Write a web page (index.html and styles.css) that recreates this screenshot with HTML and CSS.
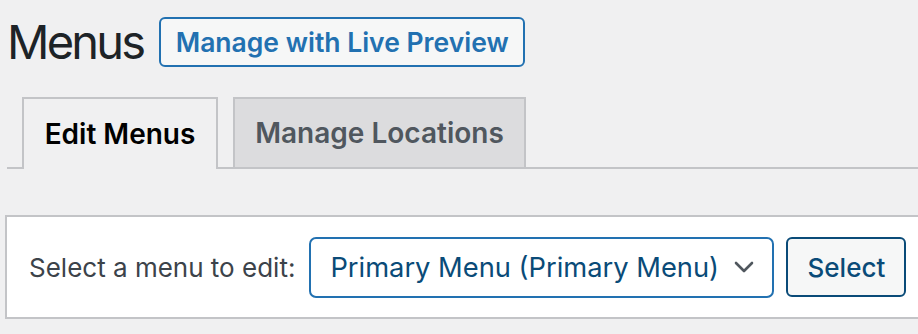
FILE: index.html
```html
<!DOCTYPE html>
<html lang="en">
<head>
<meta charset="utf-8">
<title>Menus</title>
<link rel="stylesheet" href="styles.css">
</head>
<body>
<div class="wrap">
  <div class="header">
    <h1 class="title">Menus</h1>
    <a class="live-btn" href="#">Manage with Live Preview</a>
  </div>
  <nav class="tabs">
    <a class="tab tab-active" href="#">Edit Menus</a>
    <a class="tab" href="#">Manage Locations</a>
  </nav>
  <div class="panel">
    <label class="label" for="menu">Select a menu to edit:</label>
    <div class="select">
      <span class="select-text">Primary Menu (Primary Menu)</span>
      <svg class="chevron" width="20" height="12" viewBox="0 0 20 12" aria-hidden="true"><path d="M2 2 L10 10 L18 2" fill="none" stroke="#50575e" stroke-width="2.6" stroke-linecap="round" stroke-linejoin="round"/></svg>
    </div>
    <button class="select-btn" type="button">Select</button>
  </div>
</div>
</body>
</html>
```

FILE: styles.css
```css
html, body {
  margin: 0;
  padding: 0;
  background: #f0f0f1;
  overflow: hidden;
}
body {
  font-family: Inter, "Noto Sans", "Liberation Sans", sans-serif;
  color: #3c434a;
}
.wrap {
  padding-top: 17px;
}
.header {
  display: flex;
  align-items: center;
  gap: 16px;
  padding-left: 7px;
}
.title {
  margin: 0;
  font-size: 47px;
  font-weight: 400;
  line-height: 50px;
  color: #1d2327;
  letter-spacing: -2.8px;
}
.live-btn {
  box-sizing: border-box;
  height: 50px;
  width: 366px;
  display: flex;
  align-items: center;
  justify-content: center;
  border: 2px solid #2271b1;
  border-radius: 6px;
  background: #f6f7f7;
  color: #2271b1;
  font-size: 26.5px;
  font-weight: 600;
  text-decoration: none;
}
.tabs {
  margin-top: 30px;
  margin-left: 7px;
  padding-left: 15px;
  display: flex;
  gap: 15px;
  border-bottom: 2px solid #c3c4c7;
}
.tab {
  box-sizing: border-box;
  height: 70px;
  display: flex;
  align-items: center;
  justify-content: center;
  border: 2px solid #c3c4c7;
  border-bottom: none;
  background: #dcdcde;
  color: #50575e;
  font-size: 28px;
  font-weight: 600;
  text-decoration: none;
  width: 293px;
}
.tab-active {
  width: 196px;
  background: #f0f0f1;
  color: #000;
  height: 72px;
  margin-bottom: -2px;
}
.panel {
  margin-top: 46px;
  margin-left: 5px;
  margin-right: -60px;
  box-sizing: border-box;
  height: 104px;
  background: #fff;
  border: 2px solid #c3c4c7;
  display: flex;
  align-items: center;
  padding-left: 22px;
}
.label {
  font-size: 26px;
  color: #3c434a;
  margin-right: 14px;
}
.select {
  box-sizing: border-box;
  width: 465px;
  height: 61px;
  border: 2px solid #2271b1;
  border-radius: 7px;
  display: flex;
  align-items: center;
  padding: 0 18px 0 19px;
  color: #0a4b78;
  font-size: 27.3px;
  margin-right: 12px;
}
.select-text {
  flex: 1;
  white-space: nowrap;
}
.chevron {
  display: block;
}
.select-btn {
  box-sizing: border-box;
  width: 120px;
  height: 60px;
  border: 2px solid #0a4b78;
  border-radius: 6px;
  background: #f6f7f7;
  color: #0a4b78;
  font-family: inherit;
  font-size: 26px;
  font-weight: 500;
  padding: 0;
}
```
